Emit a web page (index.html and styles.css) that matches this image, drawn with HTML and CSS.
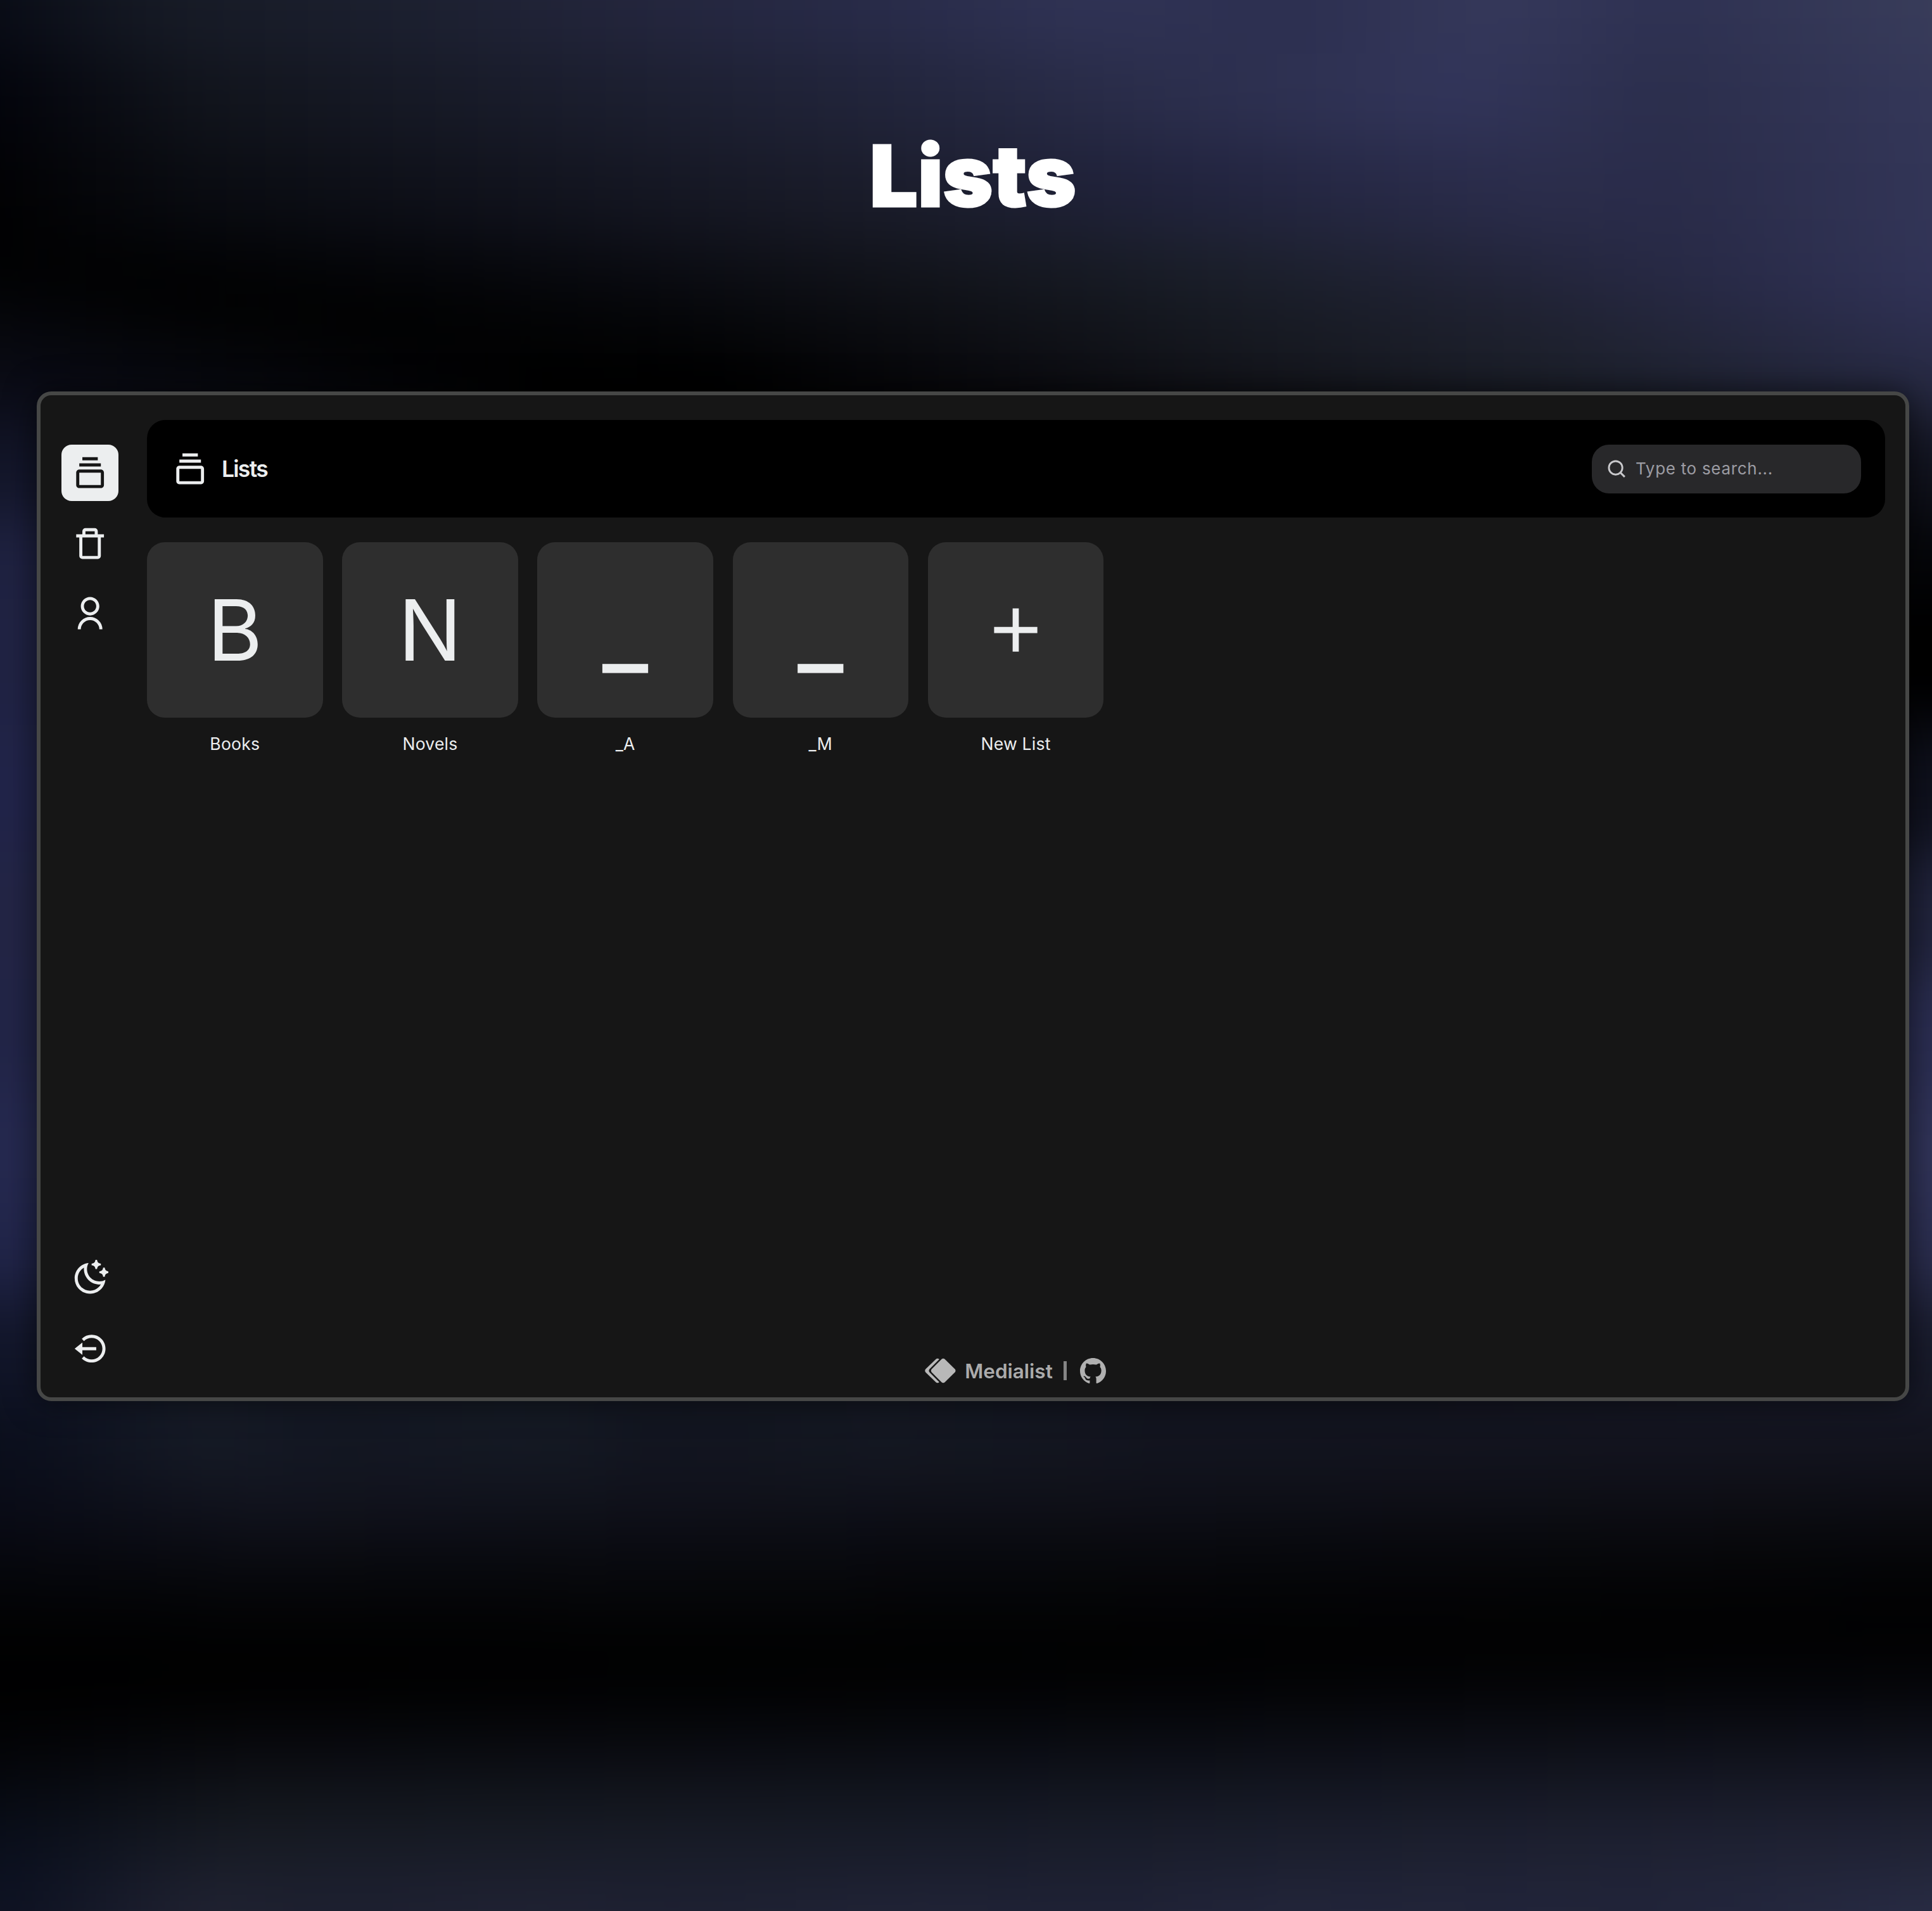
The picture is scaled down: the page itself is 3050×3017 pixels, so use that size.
FILE: index.html
```html
<!DOCTYPE html>
<html lang="en">
<head>
<meta charset="utf-8">
<title>Lists</title>
<link rel="stylesheet" href="styles.css">
</head>
<body>
<div class="backdrop"></div>
<div class="page">
  <h1 class="page-title"><span>Lists</span></h1>
  <div class="window">
    <nav class="sidebar">
      <a class="nav-button active"><svg class="icon" viewBox="0 0 24 24"><path d="M19 10H5c-1.103 0-2 .897-2 2v8c0 1.103.897 2 2 2h14c1.103 0 2-.897 2-2v-8c0-1.103-.897-2-2-2zM5 20v-8h14l.002 8H5zM5 6h14v2H5zm2-4h10v2H7z"/></svg></a>
      <a class="nav-button"><svg class="icon" viewBox="0 0 24 24"><path d="M5 20a2 2 0 0 0 2 2h10a2 2 0 0 0 2-2V8h2V6h-4V4a2 2 0 0 0-2-2H9a2 2 0 0 0-2 2v2H3v2h2zM9 4h6v2H9zm8 4v12H7V8z"/></svg></a>
      <a class="nav-button"><svg class="icon" viewBox="0 0 24 24"><path d="M4 22a8 8 0 1 1 16 0h-2a6 6 0 1 0-12 0H4zm8-9c-3.315 0-6-2.685-6-6s2.685-6 6-6 6 2.685 6 6-2.685 6-6 6zm0-2c2.21 0 4-1.79 4-4s-1.79-4-4-4-4 1.79-4 4 1.79 4 4 4z"/></svg></a>
      <a class="nav-button push"><svg class="icon" viewBox="0 0 24 24"><path d="M10 6C10 10.4183 13.5817 14 18 14C19.4386 14 20.7885 13.6203 21.9549 12.9556C21.4738 18.0302 17.2005 22 12 22C6.47715 22 2 17.5228 2 12C2 6.79948 5.9698 2.52616 11.0444 2.04507C10.3797 3.21152 10 4.56142 10 6ZM4 12C4 16.4183 7.58172 20 12 20C14.9654 20 17.5757 18.3788 18.9571 15.9546C18.6407 15.9848 18.3214 16 18 16C12.4772 16 8 11.5228 8 6C8 5.67863 8.01524 5.35933 8.04536 5.04293C5.62119 6.42426 4 9.03458 4 12ZM18.1642 2.29104L19 2.5V3.5L18.1642 3.70896C17.4476 3.8881 16.8881 4.4476 16.709 5.16417L16.5 6H15.5L15.291 5.16417C15.1119 4.4476 14.5524 3.8881 13.8358 3.70896L13 3.5V2.5L13.8358 2.29104C14.5524 2.1119 15.1119 1.5524 15.291 0.835829L15.5 0H16.5L16.709 0.835829C16.8881 1.5524 17.4476 2.1119 18.1642 2.29104ZM23.1642 7.29104L24 7.5V8.5L23.1642 8.70896C22.4476 8.8881 21.8881 9.4476 21.709 10.1642L21.5 11H20.5L20.291 10.1642C20.1119 9.4476 19.5524 8.8881 18.8358 8.70896L18 8.5V7.5L18.8358 7.29104C19.5524 7.1119 20.1119 6.5524 20.291 5.83583L20.5 5H21.5L21.709 5.83583C21.8881 6.5524 22.4476 7.1119 23.1642 7.29104Z"/></svg></a>
      <a class="nav-button"><svg class="icon" viewBox="0 0 24 24"><path d="m2 12 5 4v-3h9v-2H7V8z"/><path d="M13.001 2.999a8.938 8.938 0 0 0-6.364 2.637L8.051 7.05c1.322-1.322 3.08-2.051 4.95-2.051s3.628.729 4.95 2.051 2.051 3.08 2.051 4.95-.729 3.628-2.051 4.95-3.08 2.051-4.95 2.051-3.628-.729-4.95-2.051l-1.414 1.414c1.699 1.7 3.959 2.637 6.364 2.637s4.665-.937 6.364-2.637c1.7-1.699 2.637-3.959 2.637-6.364s-.937-4.665-2.637-6.364a8.938 8.938 0 0 0-6.364-2.637z"/></svg></a>
    </nav>
    <main class="content">
      <header class="topbar">
        <svg class="icon" viewBox="0 0 24 24"><path d="M19 10H5c-1.103 0-2 .897-2 2v8c0 1.103.897 2 2 2h14c1.103 0 2-.897 2-2v-8c0-1.103-.897-2-2-2zM5 20v-8h14l.002 8H5zM5 6h14v2H5zm2-4h10v2H7z"/></svg>
        <h2 class="topbar-title">Lists</h2>
        <div class="search">
          <svg class="search-icon" viewBox="0 0 30 30"><circle cx="13" cy="13" r="11" /><path d="M20.8 20.8l7 7"/></svg>
          <span class="search-text">Type to search...</span>
        </div>
      </header>
      <section class="tiles">
        <div class="tile"><div class="cover">B</div><div class="label">Books</div></div>
        <div class="tile"><div class="cover">N</div><div class="label">Novels</div></div>
        <div class="tile"><div class="cover"><span class="dash">_</span></div><div class="label">_A</div></div>
        <div class="tile"><div class="cover"><span class="dash">_</span></div><div class="label">_M</div></div>
        <div class="tile"><div class="cover"><svg class="plus" viewBox="0 0 24 24"><path d="M19 11h-6V5h-2v6H5v2h6v6h2v-6h6z"/></svg></div><div class="label">New List</div></div>
      </section>
      <footer class="footer">
        <svg class="logo" viewBox="0 0 49 40"><path d="M26.500 1.700Q29 -.2 31.500 1.700L47.500 17.500Q49.500 20 47.500 22.500L31.500 38.300Q29 40.200 26.500 38.300L10.800 22.500Q8.800 20 10.800 17.500Z"/><path d="M19.500 .8Q21.500 .6 22.800 2L7.400 17.600Q5.400 20 7.400 22.400L22.800 38Q21.500 39.500 19.500 39.200Q18 38.700 17 37.700L1.200 22.500Q-.7 20 1.200 17.500L17 2.300Q18 1.200 19.500 .8Z"/></svg>
        <span class="brand">Medialist</span>
        <span class="bar"></span>
        <svg class="github" viewBox="0 0 16 16"><path d="M8 0C3.580 0 0 3.580 0 8c0 3.540 2.290 6.530 5.470 7.590.4.070.55-.17.55-.38 0-.19-.01-.82-.01-1.490-2.010.37-2.530-.49-2.690-.94-.09-.23-.48-.94-.82-1.130-.28-.15-.68-.52-.01-.53.63-.01 1.080.58 1.230.82.72 1.210 1.870.87 2.330.66.07-.52.28-.87.51-1.070-1.780-.2-3.640-.89-3.640-3.950 0-.87.31-1.590.82-2.150-.08-.2-.36-1.020.08-2.120 0 0 .67-.21 2.200.82.64-.18 1.320-.27 2-.27s1.360.09 2 .27c1.530-1.040 2.200-.82 2.200-.82.44 1.100.16 1.920.08 2.120.51.56.82 1.270.82 2.150 0 3.070-1.870 3.750-3.650 3.950.29.25.54.73.54 1.480 0 1.070-.01 1.930-.01 2.200 0 .21.15.46.55.38A8.010 8.010 0 0 0 16 8c0-4.420-3.580-8-8-8z"/></svg>
      </footer>
    </main>
  </div>
</div>
</body>
</html>
```
FILE: styles.css
```css
* { box-sizing: border-box; }

html, body {
  margin: 0;
  height: 3017px;
  overflow: hidden;
  background: #000;
}

body {
  position: relative;
  font-family: Inter, "Open Sans", sans-serif;
  color: #eceeef;
}

/* Stacked horizontal gradients, blurred together into soft folds */
.backdrop {
  position: absolute;
  inset: -150px;
  filter: blur(50px);
  background:
    linear-gradient(90deg, #070a14 3%, #161a25 12%, #1c2030 24%, #23253c 34%, #282b49 46%, #303355 56%, #2c2f50 65%, #35385a 75%, #2e3152 83%, #393d5a 97%) 0 0 / 100% 235px,
    linear-gradient(90deg, #02030a 4%, #11141c 14%, #181b29 28%, #21243a 46%, #2b2e4c 60%, #32355a 73%, #2b2e4c 83%, #35385a 97%) 0 235px / 100% 140px,
    linear-gradient(90deg, #010103 4%, #0a0c12 14%, #11131d 28%, #1b1d2c 46%, #21233e 60%, #2b2d4c 76%, #2a2c4a 84%, #333658 97%) 0 375px / 100% 130px,
    linear-gradient(90deg, #000 4%, #030407 14%, #090a11 28%, #14161f 46%, #1d212e 62%, #252740 76%, #292b48 85%, #333658 97%) 0 505px / 100% 70px,
    linear-gradient(90deg, #020305 4%, #000 13%, #020304 24%, #07080d 35%, #101218 48%, #181c26 62%, #212336 76%, #282a48 86%, #32345a 97%) 0 575px / 100% 70px,
    linear-gradient(90deg, #07080f 4%, #030405 14%, #000 23%, #020304 35%, #0b0c11 48%, #15181f 62%, #1e212e 78%, #2c2e4e 97%) 0 645px / 100% 70px,
    linear-gradient(90deg, #0a0b16 4%, #07080e 16%, #010101 30%, #000 39%, #0a0a0f 52%, #14151c 64%, #1c202b 78%, #282b45 97%) 0 715px / 100% 100px,
    linear-gradient(90deg, #13162a 5%, #000 30%, #000 70%, #11131f 97%) 0 815px / 100% 150px,
    linear-gradient(90deg, #1f2242 5%, #101018 30%, #000 70%, #040509 97%) 0 965px / 100% 130px,
    linear-gradient(90deg, #202344 5%, #101018 30%, #000 70%, #000 97%) 0 1095px / 100% 200px,
    linear-gradient(90deg, #21244a 5%, #101018 30%, #000 70%, #0f111e 97%) 0 1295px / 100% 200px,
    linear-gradient(90deg, #232546 5%, #101018 30%, #000 70%, #22253f 97%) 0 1495px / 100% 200px,
    linear-gradient(90deg, #222548 5%, #101018 30%, #101018 70%, #2c2f55 97%) 0 1695px / 100% 180px,
    linear-gradient(90deg, #252950 5%, #101018 30%, #101018 70%, #32355c 97%) 0 1875px / 100% 190px,
    linear-gradient(90deg, #21254a 5%, #101018 30%, #101018 70%, #2c2f52 97%) 0 2065px / 100% 130px,
    linear-gradient(90deg, #12162a 5%, #151924 16%, #141822 40%, #12141f 70%, #181b2c 97%) 0 2195px / 100% 160px,
    linear-gradient(90deg, #0a0e1c 5%, #161b26 14%, #121622 20%, #151a24 30%, #11141f 36%, #141822 46%, #12141f 60%, #13141f 97%) 0 2355px / 100% 120px,
    linear-gradient(90deg, #0a0c18 5%, #12141f 16%, #10111a 50%, #0d0d14 97%) 0 2475px / 100% 80px,
    linear-gradient(90deg, #070810 5%, #0b0c13 16%, #08090f 50%, #060709 97%) 0 2555px / 100% 80px,
    linear-gradient(90deg, #030406 5%, #050608 40%, #010102 97%) 0 2635px / 100% 80px,
    linear-gradient(90deg, #000 5%, #000 50%, #010102 97%) 0 2715px / 100% 90px,
    linear-gradient(90deg, #000 5%, #030406 50%, #08090f 97%) 0 2805px / 100% 80px,
    linear-gradient(90deg, #040509 5%, #0b0c12 16%, #0c0e16 50%, #12141f 97%) 0 2885px / 100% 90px,
    linear-gradient(90deg, #080c16 5%, #14181e 16%, #151924 50%, #1d1f30 97%) 0 2975px / 100% 90px,
    linear-gradient(90deg, #0b1020 5%, #1b1e2b 14%, #1b1e2e 50%, #23263a 97%) 0 3065px / 100% 80px,
    linear-gradient(90deg, #0e1222 5%, #212333 14%, #1c1f30 20%, #212335 30%, #1d2032 36%, #222539 48%, #1e2136 56%, #23263c 64%, #20233a 83%, #2a2e48 97%) 0 3145px / 100% 180px;
  background-repeat: no-repeat;
}

.page {
  position: relative;
  display: flex;
  flex-direction: column;
  height: 3017px;
  padding: 0 36px 0 58px;
}

.page-title {
  display: flex;
  justify-content: center;
  height: 618px;
  margin: 0;
  padding-top: 196px;
  color: #fff;
  font-size: 134px;
  font-weight: 900;
  line-height: 162px;
  letter-spacing: 0;
  -webkit-text-stroke: 3px #fff;
}

.window {
  display: flex;
  height: 1594px;
  border: 6px solid #464746;
  border-radius: 23px;
  background: #161616;
  box-shadow: 0 0 50px rgba(0, 0, 0, .55);
}

.sidebar {
  display: flex;
  flex-direction: column;
  align-items: center;
  gap: 22px;
  width: 168px;
  padding: 77.500px 12px 32px 0;
}

.nav-button {
  display: flex;
  align-items: center;
  justify-content: center;
  width: 89.5px;
  height: 89.5px;
  border-radius: 16px;
}

.nav-button.active { background: #eceeef; color: #161616; }
.nav-button.push { margin-top: auto; }

.icon {
  flex: none;
  width: 58.400px;
  height: 58.400px;
  fill: currentColor;
}

.content {
  display: flex;
  flex: 1;
  flex-direction: column;
  padding: 39px 32px 0 0;
}

.topbar {
  display: flex;
  align-items: center;
  height: 154px;
  padding: 0 38px 0 38.500px;
  border-radius: 29px;
  background: #000;
}

.topbar-title {
  margin: 0 0 0 21px;
  font-size: 35.500px;
  font-weight: 600;
  letter-spacing: -1.700px;
}

.search {
  display: flex;
  align-items: center;
  gap: 15px;
  width: 425px;
  height: 77px;
  margin-left: auto;
  padding-left: 25px;
  border-radius: 27px;
  background: #28282a;
}

.search-icon {
  width: 29px;
  height: 29px;
  fill: none;
  stroke: #c9c9cc;
  stroke-width: 3px;
}

.search-text {
  padding-bottom: 2px;
  color: #9c9ca3;
  font-size: 26px;
  letter-spacing: .7px;
}

.tiles {
  display: flex;
  gap: 30.700px;
  margin-top: 38.500px;
}

.tile { width: 277.500px; }

.cover {
  display: flex;
  align-items: center;
  justify-content: center;
  height: 277.500px;
  border-radius: 28px;
  background: #2e2e2e;
  font-size: 133px;
  line-height: 1;
}

.dash {
  padding-bottom: 30px;
  font-family: "Open Sans", sans-serif;
  font-size: 152px;
  -webkit-text-stroke: 5px #eceeef;
}

.plus {
  width: 117px;
  height: 117px;
  fill: currentColor;
}

.label {
  margin-top: 23.500px;
  font-size: 26.600px;
  line-height: 34px;
  letter-spacing: .2px;
  text-align: center;
}

.footer {
  display: flex;
  align-items: center;
  justify-content: center;
  height: 84px;
  margin-top: auto;
  padding-right: 2px;
  color: #ababab;
}

.logo { width: 49px; height: 40px; fill: #b8b8b8; }

.brand {
  margin-left: 14px;
  font-size: 31.500px;
  font-weight: 600;
  letter-spacing: 0;
}

.bar {
  width: 5px;
  height: 30px;
  margin: 0 21px 0 17px;
  background: #858585;
}

.github { width: 41px; height: 41px; fill: #b0b0b0; }
```
